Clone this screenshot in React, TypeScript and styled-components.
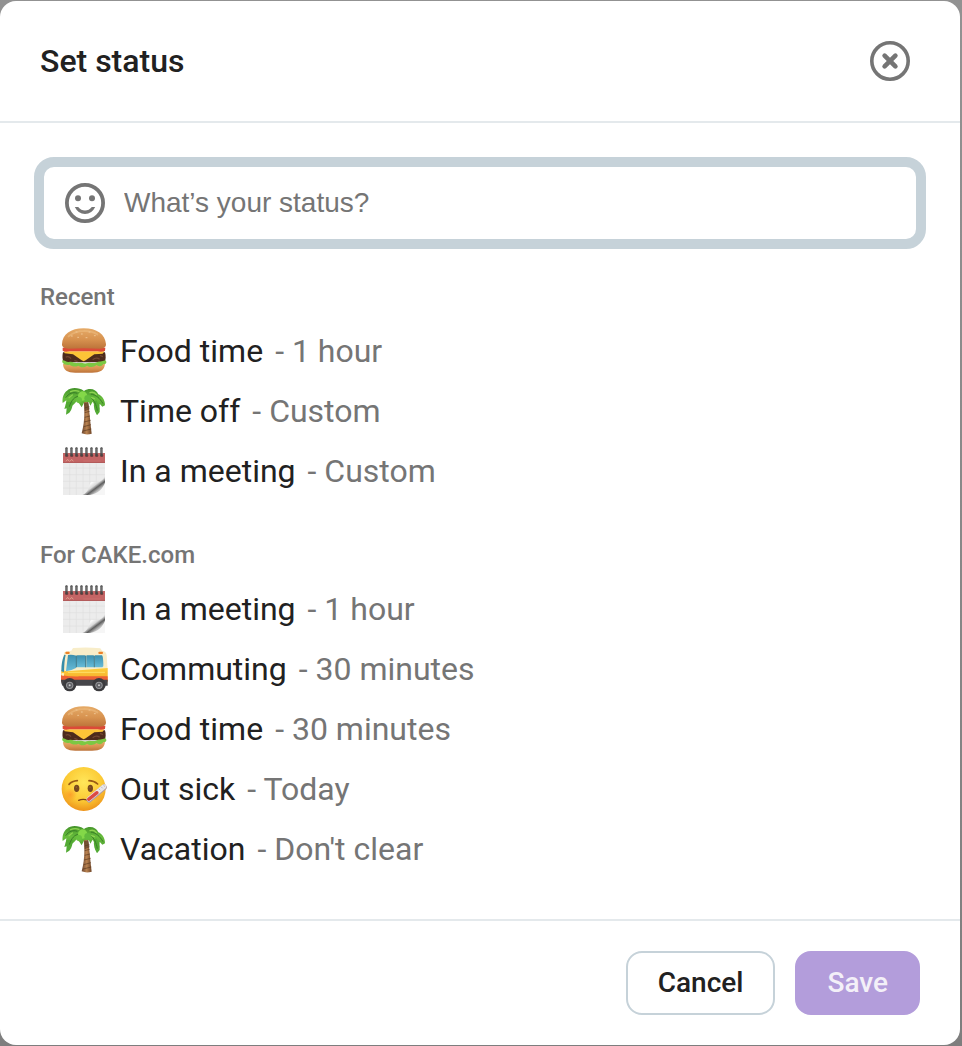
import React, { useState } from "react";
import styled, { createGlobalStyle } from "styled-components";

const GlobalStyle = createGlobalStyle`
  *, *::before, *::after { box-sizing: border-box; }
  body {
    margin: 0;
    font-family: Roboto, "Liberation Sans", sans-serif;
    color: #212121;
    background: #8a8a8a;
  }
`;

const Backdrop = styled.main`
  min-height: 100vh;
  padding: 1px 2px 1px 0;
  background: linear-gradient(#929292, #7e7e7e);
`;

const Dialog = styled.form`
  background: #fff;
  border-radius: 16px;
`;

const Header = styled.header`
  display: flex;
  align-items: center;
  justify-content: space-between;
  padding: 40px 50px 40px 40px;
  border-bottom: 2px solid #e4e9ec;
`;

const Title = styled.h1`
  margin: 0;
  font-size: 32px;
  line-height: 40px;
  font-weight: 500;
`;

const IconButton = styled.button`
  display: block;
  width: 40px;
  height: 40px;
  padding: 0;
  border: 0;
  background: none;
  color: #757575;
  cursor: pointer;
`;

const Body = styled.div`
  display: flex;
  flex-direction: column;
  padding: 34px 34px 40px;
`;

const Field = styled.div`
  display: flex;
  align-items: center;
  gap: 19px;
  height: 92px;
  margin-bottom: 34px;
  padding: 0 21px;
  border: 10px solid #c6d2d9;
  border-radius: 20px;
`;

const StatusInput = styled.input`
  flex: 1;
  min-width: 0;
  height: 40px;
  padding: 0;
  border: 0;
  outline: 0;
  background: none;
  font-family: "Liberation Sans", Arial, sans-serif;
  font-size: 28px;
  color: #212121;
  &::placeholder { color: #757575; opacity: 1; }
`;

const Group = styled.section`
  padding: 0 6px;
  & + & { margin-top: 40px; }
`;

const GroupTitle = styled.h2`
  margin: 0 0 10px;
  font-size: 24px;
  line-height: 28px;
  font-weight: 500;
  color: #757575;
`;

const List = styled.ul`
  margin: 0;
  padding: 0;
  list-style: none;
`;

const Preset = styled.button`
  display: flex;
  align-items: center;
  width: 100%;
  height: 60px;
  padding: 0 20px;
  border: 0;
  background: none;
  font: inherit;
  font-size: 32px;
  line-height: 40px;
  color: #212121;
  cursor: pointer;
`;

const Label = styled.span`
  margin: 0 12px;
`;

const Duration = styled.span`
  color: #757575;
`;

const Footer = styled.footer`
  display: flex;
  justify-content: flex-end;
  gap: 20px;
  padding: 30px 40px;
  border-top: 2px solid #e4e9ec;
`;

const Action = styled.button<{ $primary?: boolean }>`
  height: 64px;
  padding: 0 30px 2px;
  border: 2px solid ${(p) => (p.$primary ? "#b39ddb" : "#c6d2d9")};
  border-radius: 16px;
  background: ${(p) => (p.$primary ? "#b39ddb" : "#fff")};
  color: ${(p) => (p.$primary ? "#f3f0f8" : "#212121")};
  font-family: inherit;
  font-size: 28px;
  font-weight: 500;
  cursor: pointer;
`;

const EmojiSvg = styled.svg`
  flex: none;
  width: 48px;
  height: 48px;
`;

const SharedDefs = styled.svg`
  position: absolute;
  width: 0;
  height: 0;
`;

function Gradients() {
  return (
    <SharedDefs aria-hidden="true">
      <defs>
        <linearGradient id="bun" x1="0" y1="0" x2="0" y2="1">
          <stop offset="0" stopColor="#e6ab68" />
          <stop offset=".55" stopColor="#d7924f" />
          <stop offset="1" stopColor="#bd733a" />
        </linearGradient>
        <linearGradient id="leaf" x1="0" y1="0" x2="0" y2="1">
          <stop offset="0" stopColor="#43932a" />
          <stop offset=".45" stopColor="#68bd3c" />
          <stop offset="1" stopColor="#4a9c30" />
        </linearGradient>
        <linearGradient id="trunk">
          <stop offset="0" stopColor="#6b4630" />
          <stop offset=".5" stopColor="#b98250" />
          <stop offset="1" stopColor="#6e4426" />
        </linearGradient>
        <linearGradient id="curl" gradientUnits="userSpaceOnUse" x1="126" y1="128" x2="150" y2="160">
          <stop offset="0" stopColor="#fafafa" />
          <stop offset=".28" stopColor="#d8d8d8" />
          <stop offset=".5" stopColor="#5e5e5e" />
          <stop offset=".72" stopColor="#b4b4b4" />
          <stop offset="1" stopColor="#f2f2f2" />
        </linearGradient>
        <linearGradient id="glass" x1="0" y1="0" x2="0" y2="1">
          <stop offset="0" stopColor="#3b8fae" />
          <stop offset="1" stopColor="#68bcd8" />
        </linearGradient>
        <linearGradient id="busBody" x1="0" y1="0" x2="0" y2="1">
          <stop offset="0" stopColor="#fdd03a" />
          <stop offset="1" stopColor="#f4a72a" />
        </linearGradient>
        <radialGradient id="face" cx=".5" cy=".35" r=".68">
          <stop offset="0" stopColor="#ffe65a" />
          <stop offset=".6" stopColor="#fccb35" />
          <stop offset="1" stopColor="#ec8d17" />
        </radialGradient>
        <radialGradient id="blush">
          <stop offset="0" stopColor="#fb8a24" stopOpacity=".65" />
          <stop offset="1" stopColor="#fb8a24" stopOpacity="0" />
        </radialGradient>
      </defs>
    </SharedDefs>
  );
}

function Burger() {
  return (
    <EmojiSvg viewBox="30 21 144 144" aria-hidden="true">
      <path d="M39 132 C40 151 52 158 76 158 H126 C151 158 163 151 165 132 Z" fill="url(#bun)" />
      <path d="M39 97 H165 C168 108 168 120 163 127 H42 C36 120 37 106 39 97Z" fill="#4d2b1c" />
      <path d="M47 112 Q55 106 63 116 M128 119 Q139 110 149 118 M73 121 L83 125 M150 106 L159 110" fill="none" stroke="#714531" strokeWidth="4" />
      <path d="M37 121 C44 120 48 127 57 126 C67 123 72 130 82 129 C92 126 99 131 109 130 C119 125 127 131 137 128 C147 124 156 125 166 121 C172 126 169 134 160 132 C154 141 145 139 139 135 C129 144 118 141 111 137 C101 144 91 142 85 137 C75 142 65 139 59 134 C48 138 34 131 37 121Z" fill="#7cc843" />
      <path d="M42 94 H163 L158 101 L133 103 L107 121 Q101 126 95 121 L69 103 L44 100Z" fill="#fcc437" />
      <path d="M38 83 H166 L165 93 Q154 97 143 94 H59 Q43 97 38 92Z" fill="#dc4a38" />
      <path d="M36 73 C37 43 62 25 101 25 C141 25 166 43 168 73 C168 84 158 86 150 86 Q102 83 55 86 C45 86 36 83 36 73Z" fill="url(#bun)" />
      <path d="M56 49 Q75 33 101 33 Q124 32 142 43" fill="none" stroke="#efbf83" strokeWidth="6" strokeLinecap="round" opacity=".5" />
      <path d="M78 36 h3 M94 42 h3 M117 36 h3 M133 47 h3 M64 48 h3 M108 53 h3 M83 52 h3" stroke="#efc491" strokeWidth="3" strokeLinecap="round" />
    </EmojiSvg>
  );
}

function Palm() {
  return (
    <EmojiSvg viewBox="30 21 144 144" aria-hidden="true">
      <path d="M101 65 L114 65 C119 94 121 132 125 161 Q110 166 95 160 C103 131 105 98 101 65Z" fill="url(#trunk)" />
      <path d="M103 70 L115 66 L119 88 L104 94Z" fill="#4e3424" opacity=".6" />
      <path d="M104 84 L118 80 M104 98 L119 94 M104 112 L120 108 M102 126 L122 121 M101 140 L123 134 M99 153 L124 147" stroke="#5b3921" strokeWidth="2" />
      <path d="M102 33 C86 21 61 22 51 32 C42 38 36 51 38 69 L49 61 L47 77 L59 68 L60 82 L72 73 L80 64 L88 71 L95 82 L103 66 L117 67 L121 77 L128 65 L134 76 L137 96 L148 88 L149 71 L157 80 L165 76 C165 58 155 47 145 43 C139 28 119 22 102 33Z" fill="url(#leaf)" />
      <path d="M49 67 L43 87 L50 85 L48 104 L58 98 C68 87 66 76 71 66 Z M132 66 C130 82 134 94 141 106 L149 96 C151 84 145 72 139 61Z" fill="#52aa34" />
      <path d="M82 40 C68 35 57 40 47 53 M87 49 C73 50 65 60 58 80 M122 42 C139 45 149 54 159 71 M122 53 C132 60 139 74 142 92" fill="none" stroke="#397c27" strokeWidth="3" />
      <path d="M62 35 Q74 29 87 34 M57 53 L67 45 M120 38 Q132 34 139 44 M125 53 L133 56" fill="none" stroke="#8fd351" strokeWidth="4" strokeLinecap="round" />
      <circle cx="98" cy="48" r="14" fill="#83d848" />
      <circle cx="113" cy="55" r="10" fill="#62bb3d" />
      <circle cx="87" cy="60" r="9" fill="#69c13f" />
    </EmojiSvg>
  );
}

function Calendar() {
  return (
    <EmojiSvg viewBox="30 21 144 144" aria-hidden="true">
      <path d="M39 66 H165 V165 H39Z" fill="#ececec" />
      <path d="M39 84 H165 M39 104 H165 M39 124 H148 M39 144 H129 M59 70 V165 M79 70 V165 M99 70 V160 M119 70 V153 M139 70 V132" stroke="#e0e0e0" strokeWidth="2" />
      <path d="M96 165 C120 155 115 132 125 125 C141 130 156 126 165 108 V165Z" fill="url(#curl)" />
      <path d="M120 165 C145 160 159 145 165 128 V165Z" fill="#f6f6f6" />
      <rect x="39" y="39" width="126" height="30" fill="#c46565" />
      <path d="M39 67 H165" stroke="#b05a5a" strokeWidth="3" />
      <path d="M48 64 L53 58 L58 64 M60 64 L65 58 L70 64" stroke="#dd9f8d" strokeWidth="3" fill="none" />
      <path d="M100 63 H152" stroke="#cf7774" strokeWidth="2" />
      {[50, 65, 80, 95, 110, 125, 140, 155].map((x) => (
        <g key={x}>
          <ellipse cx={x} cy="47" rx="5" ry="4" fill="#713e3e" />
          <rect x={x - 4} y="22" width="7" height="26" rx="3" fill="#484848" />
          <path d={`M${x + 1} 25 V40`} stroke="#b4b4b4" strokeWidth="2" />
        </g>
      ))}
    </EmojiSvg>
  );
}

function Bus() {
  return (
    <EmojiSvg viewBox="30 15 144 144" aria-hidden="true">
      <path d="M43 37 Q47 33 64 32 L69 24 Q111 20 151 25 L156 32 Q168 33 170 45 L173 91 V132 H37 L33 120 L35 70Z" fill="#f8edc9" />
      <path d="M34 90 L50 94 L173 84 V122 H33Z" fill="url(#busBody)" />
      <path d="M33 105 Q67 111 88 109 H173 V125 H33Z" fill="#ec6135" />
      <path d="M33 119 H173 V137 H37 Q33 132 33 119Z" fill="#46464a" />
      <path d="M43 44 Q34 62 34 94 L42 96 Q43 60 47 45Z" fill="#368ca9" />
      <path d="M54 45 Q66 43 79 47 L78 84 Q66 91 48 94Z" fill="url(#glass)" />
      <rect x="80" y="46" width="26" height="36" rx="2" fill="url(#glass)" />
      <rect x="109" y="46" width="23" height="36" rx="2" fill="url(#glass)" />
      <path d="M135 46 H156 Q160 48 160 79 L157 82 H135Z" fill="url(#glass)" />
      <path d="M79 47 V82 M107 47 V82 M133 47 V82" stroke="#32758b" strokeWidth="3" />
      <rect x="46" y="35" width="13" height="7" rx="3" fill="#ee8128" />
      <rect x="145" y="35" width="14" height="7" rx="3" fill="#ee8128" />
      <path d="M54 97 H165" stroke="#ffdf68" strokeWidth="3" />
      <path d="M35 99 L43 100 L41 108 L34 106Z" fill="#fff3bd" />
      {[59, 147].map((x) => (
        <g key={x}>
          <circle cx={x} cy="134" r="20" fill="#3b3b3e" />
          <circle cx={x} cy="136" r="11" fill="#96979a" />
          <circle cx={x} cy="136" r="8" fill="#606166" />
          <circle cx={x} cy="136" r="3" fill="#ccc" />
        </g>
      ))}
    </EmojiSvg>
  );
}

function SickFace() {
  return (
    <EmojiSvg viewBox="30 15 144 144" aria-hidden="true">
      <circle cx="101" cy="87" r="66" fill="url(#face)" />
      <circle cx="61" cy="104" r="20" fill="url(#blush)" />
      <circle cx="137" cy="104" r="20" fill="url(#blush)" />
      <path d="M57 73 Q66 63 82 62 M117 62 Q132 62 143 72" fill="none" stroke="#9a5b15" strokeWidth="5" strokeLinecap="round" />
      <ellipse cx="80" cy="85" rx="8" ry="11" fill="#79491e" />
      <ellipse cx="121" cy="85" rx="8" ry="11" fill="#79491e" />
      <path d="M79 80 v3 M120 80 v3" stroke="#a3753a" strokeWidth="3" />
      <path d="M86 121 Q97 116 113 120" fill="none" stroke="#7c3f14" strokeWidth="4" strokeLinecap="round" />
      <path d="M118 119 L162 82" stroke="#b39da0" strokeWidth="17" strokeLinecap="round" />
      <path d="M117 117 L162 80" stroke="#e8e6ea" strokeWidth="14" strokeLinecap="round" />
      <path d="M116 118 L141 98" stroke="#dc4943" strokeWidth="10" strokeLinecap="round" />
      <path d="M146 86 L151 91 M153 80 L158 85 M160 75 L165 80" stroke="#a4a3ae" strokeWidth="2" />
    </EmojiSvg>
  );
}

type Item = { icon: () => React.JSX.Element; label: string; duration: string };

const groups: { title: string; items: Item[] }[] = [
  {
    title: "Recent",
    items: [
      { icon: Burger, label: "Food time", duration: "1 hour" },
      { icon: Palm, label: "Time off", duration: "Custom" },
      { icon: Calendar, label: "In a meeting", duration: "Custom" },
    ],
  },
  {
    title: "For CAKE.com",
    items: [
      { icon: Calendar, label: "In a meeting", duration: "1 hour" },
      { icon: Bus, label: "Commuting", duration: "30 minutes" },
      { icon: Burger, label: "Food time", duration: "30 minutes" },
      { icon: SickFace, label: "Out sick", duration: "Today" },
      { icon: Palm, label: "Vacation", duration: "Don't clear" },
    ],
  },
];

export default function App() {
  const [status, setStatus] = useState("");
  return (
    <Backdrop>
      <GlobalStyle />
      <Gradients />
      <Dialog role="dialog" aria-labelledby="dialog-title" onSubmit={(e) => e.preventDefault()}>
        <Header>
          <Title id="dialog-title">Set status</Title>
          <IconButton type="button" aria-label="Close">
            <svg width="40" height="40" viewBox="0 0 40 40" fill="none" stroke="currentColor">
              <circle cx="20" cy="20" r="18.2" strokeWidth="3.6" />
              <path d="M14.6 14.6 L25.4 25.4 M25.4 14.6 L14.6 25.4" strokeWidth="4.6" strokeLinecap="round" />
            </svg>
          </IconButton>
        </Header>
        <Body>
          <Field>
            <IconButton type="button" aria-label="Choose emoji">
              <svg width="40" height="40" viewBox="0 0 40 40" fill="none">
                <circle cx="20" cy="20" r="18.1" stroke="currentColor" strokeWidth="3.8" />
                <circle cx="13" cy="15.2" r="3" fill="currentColor" />
                <circle cx="27" cy="15.2" r="3" fill="currentColor" />
                <path d="M9.8 24 H13.2 Q16 27.6 20 27.6 T26.8 24 H30.2 Q26.8 31 20 31 T9.8 24Z" fill="currentColor" />
              </svg>
            </IconButton>
            <StatusInput
              type="text"
              aria-label="Status"
              placeholder="What’s your status?"
              value={status}
              onChange={(e) => setStatus(e.target.value)}
            />
          </Field>
          {groups.map((group) => (
            <Group key={group.title}>
              <GroupTitle>{group.title}</GroupTitle>
              <List>
                {group.items.map(({ icon: Icon, label, duration }) => (
                  <li key={label}>
                    <Preset type="button" onClick={() => setStatus(label)}>
                      <Icon />
                      <Label>{label}</Label>
                      <Duration>- {duration}</Duration>
                    </Preset>
                  </li>
                ))}
              </List>
            </Group>
          ))}
        </Body>
        <Footer>
          <Action type="button">Cancel</Action>
          <Action type="submit" $primary>Save</Action>
        </Footer>
      </Dialog>
    </Backdrop>
  );
}
